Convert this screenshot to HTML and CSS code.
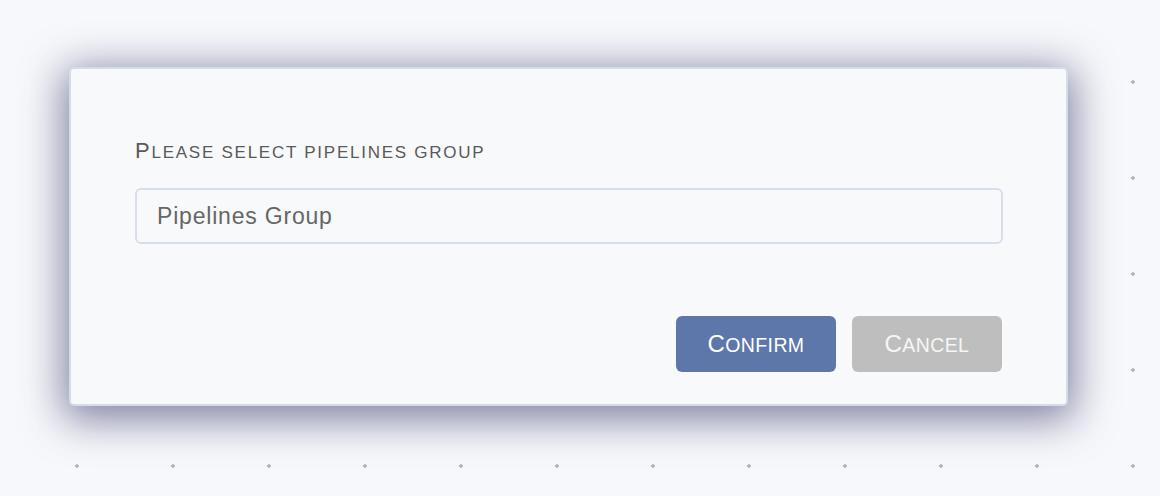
FILE: index.html
```html
<!DOCTYPE html>
<html>
<head>
<meta charset="utf-8">
<link rel="stylesheet" href="styles.css">
</head>
<body>
<div class="page">
  <div class="dialog">
    <label class="label" for="group"><span class="sc">Please select pipelines group</span></label>
    <input id="group" class="input" type="text" placeholder="Pipelines Group">
    <div class="actions">
      <button class="btn btn-primary"><span class="sc">Confirm</span></button>
      <button class="btn btn-secondary"><span class="sc">Cancel</span></button>
    </div>
  </div>
</div>
</body>
</html>
```
FILE: styles.css
```css
html, body {
  margin: 0;
  padding: 0;
}
body {
  width: 1160px;
  height: 496px;
  overflow: hidden;
  background-color: #f7f8fb;
  background-image: radial-gradient(circle, #b4b4bb 1.5px, transparent 2px);
  background-size: 96px 96px;
  background-position: 29px 34px;
  font-family: "Liberation Sans", Arial, sans-serif;
}
.page {
  padding: 67px 0 0 69px;
}
.dialog {
  box-sizing: border-box;
  width: 999px;
  height: 339px;
  background: #f8f9fb;
  border: 2px solid #d3dce8;
  border-radius: 5px;
  box-shadow: 0 8px 40px 6px rgba(60, 60, 110, 0.62);
  padding: 70px 64px 32px 64px;
  display: flex;
  flex-direction: column;
}
.sc {
  display: inline-block;
  text-transform: uppercase;
}
.label {
  font-size: 17px;
  color: #5a5a5a;
  letter-spacing: 1.75px;
  line-height: 24px;
}
.label .sc::first-letter {
  font-size: 22px;
}
.input {
  box-sizing: border-box;
  margin-top: 23px;
  width: 868px;
  height: 56px;
  border: 2px solid #d6deea;
  border-radius: 6px;
  background: #f8f9fb;
  padding: 0 20px;
  font-family: "Liberation Sans", Arial, sans-serif;
  font-size: 23px;
  letter-spacing: 0.8px;
  color: #666;
  outline: none;
}
.input::placeholder {
  color: #666;
  opacity: 1;
}
.actions {
  margin-top: auto;
  display: flex;
  justify-content: flex-end;
  gap: 16px;
}
.btn {
  height: 56px;
  border: none;
  border-radius: 6px;
  font-family: "Liberation Sans", Arial, sans-serif;
  font-size: 19.5px;
  letter-spacing: 0.4px;
  color: #fff;
  cursor: pointer;
  padding: 0;
}
.btn .sc::first-letter {
  font-size: 24px;
}
.btn-primary {
  width: 160px;
  background: #5d77aa;
}
.btn-secondary {
  width: 150px;
  background: #bebebe;
  color: #f6f6f6;
}
```
